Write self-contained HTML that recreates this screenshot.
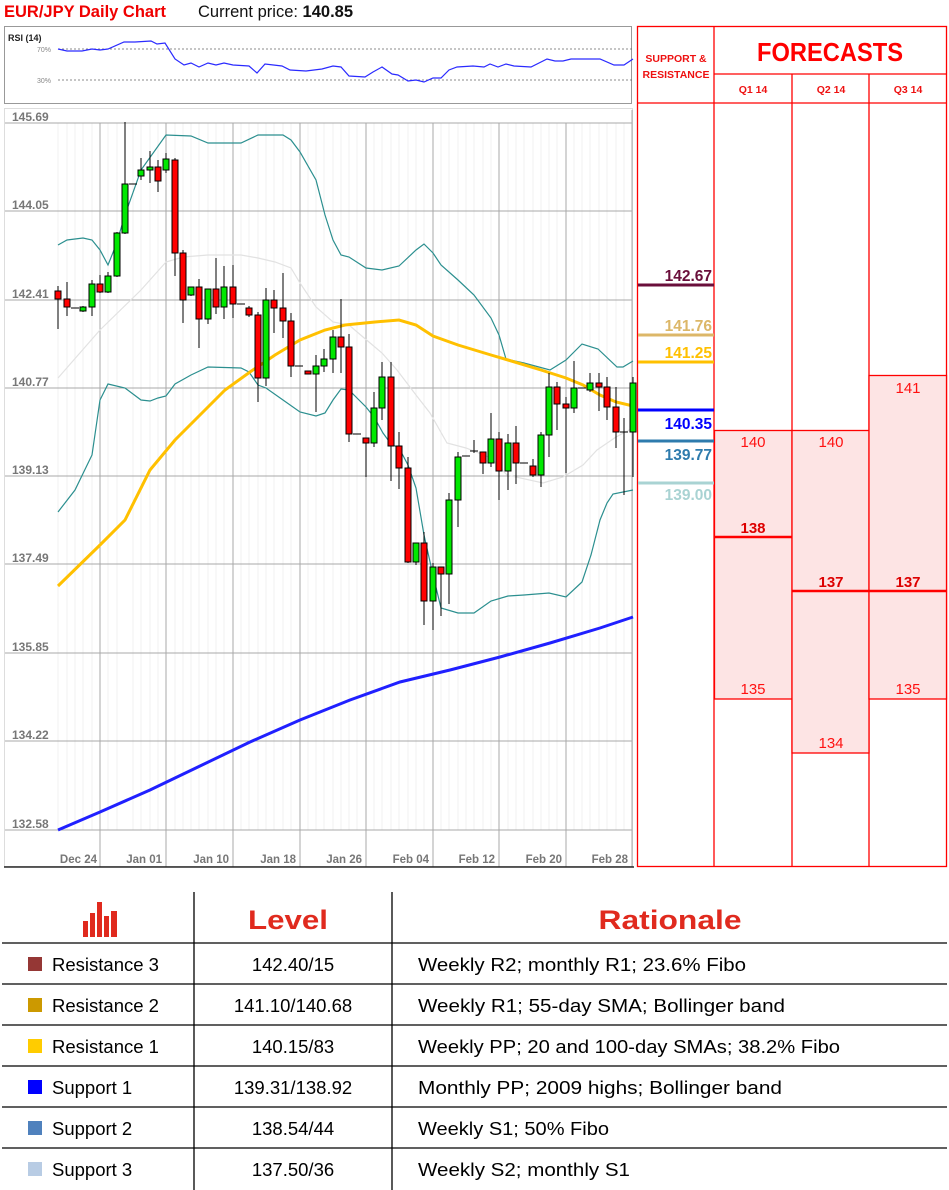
<!DOCTYPE html>
<html><head><meta charset="utf-8"><style>
html,body{margin:0;padding:0;background:#fff;}
svg{display:block;font-family:"Liberation Sans",sans-serif;}
</style></head><body>
<svg width="949" height="1190" viewBox="0 0 949 1190" xmlns="http://www.w3.org/2000/svg">
<!-- title -->
<text x="4" y="17" font-size="16.5" font-weight="bold" fill="#f00000">EUR/JPY Daily Chart</text>
<text x="198" y="17" font-size="16.5" fill="#111">Current price: <tspan font-weight="bold">140.85</tspan></text>

<!-- RSI panel -->
<rect x="4.5" y="26.5" width="627" height="77" fill="#fff" stroke="#999"/>
<text x="8" y="41" font-size="9" font-weight="bold" fill="#222">RSI (14)</text>
<line x1="58" y1="49" x2="632" y2="49" stroke="#666" stroke-dasharray="2,2" stroke-width="0.8"/>
<line x1="58" y1="80" x2="632" y2="80" stroke="#666" stroke-dasharray="2,2" stroke-width="0.8"/>
<text x="37" y="52" font-size="7" fill="#888">70%</text>
<text x="37" y="83" font-size="7" fill="#888">30%</text>
<polyline fill="none" stroke="#2a2aff" stroke-width="1.2" points="58,49 67,51 82,51 92,49 100,50 108,49 124,42 135,42 151,41 157,44 165,43 175,59 184,65 191,63 199,67 208,63 216,65 224,63 233,65 249,66 257,73 265,64 282,66 290,70 306,71 322,69 333,66 341,67 349,76 365,77 373,72 382,67 392,74 398,75 408,81 416,80 424,82 433,78 441,78 449,70 457,67 473,66 484,67 490,64 498,67 506,64 514,66 531,67 547,59 555,61 563,61 571,59 600,59 614,65 624,65 633,59"/>

<!-- chart frame -->
<rect x="4.5" y="108.5" width="628" height="758" fill="#fff" stroke="#ddd"/>
<!-- faint day lines -->
<g stroke="#f1f1f1" stroke-width="1">
<line x1="58" y1="123" x2="58" y2="830"/><line x1="67" y1="123" x2="67" y2="830"/><line x1="75" y1="123" x2="75" y2="830"/><line x1="83" y1="123" x2="83" y2="830"/><line x1="92" y1="123" x2="92" y2="830"/><line x1="108" y1="123" x2="108" y2="830"/><line x1="117" y1="123" x2="117" y2="830"/><line x1="133" y1="123" x2="133" y2="830"/><line x1="141" y1="123" x2="141" y2="830"/><line x1="150" y1="123" x2="150" y2="830"/><line x1="158" y1="123" x2="158" y2="830"/><line x1="175" y1="123" x2="175" y2="830"/><line x1="183" y1="123" x2="183" y2="830"/><line x1="191" y1="123" x2="191" y2="830"/><line x1="199" y1="123" x2="199" y2="830"/><line x1="208" y1="123" x2="208" y2="830"/><line x1="216" y1="123" x2="216" y2="830"/><line x1="224" y1="123" x2="224" y2="830"/><line x1="241" y1="123" x2="241" y2="830"/><line x1="249" y1="123" x2="249" y2="830"/><line x1="258" y1="123" x2="258" y2="830"/><line x1="266" y1="123" x2="266" y2="830"/><line x1="274" y1="123" x2="274" y2="830"/><line x1="283" y1="123" x2="283" y2="830"/><line x1="291" y1="123" x2="291" y2="830"/><line x1="308" y1="123" x2="308" y2="830"/><line x1="316" y1="123" x2="316" y2="830"/><line x1="324" y1="123" x2="324" y2="830"/><line x1="333" y1="123" x2="333" y2="830"/><line x1="341" y1="123" x2="341" y2="830"/><line x1="349" y1="123" x2="349" y2="830"/><line x1="357" y1="123" x2="357" y2="830"/><line x1="374" y1="123" x2="374" y2="830"/><line x1="382" y1="123" x2="382" y2="830"/><line x1="391" y1="123" x2="391" y2="830"/><line x1="399" y1="123" x2="399" y2="830"/><line x1="408" y1="123" x2="408" y2="830"/><line x1="416" y1="123" x2="416" y2="830"/><line x1="424" y1="123" x2="424" y2="830"/><line x1="441" y1="123" x2="441" y2="830"/><line x1="449" y1="123" x2="449" y2="830"/><line x1="458" y1="123" x2="458" y2="830"/><line x1="466" y1="123" x2="466" y2="830"/><line x1="474" y1="123" x2="474" y2="830"/><line x1="483" y1="123" x2="483" y2="830"/><line x1="491" y1="123" x2="491" y2="830"/><line x1="508" y1="123" x2="508" y2="830"/><line x1="516" y1="123" x2="516" y2="830"/><line x1="524" y1="123" x2="524" y2="830"/><line x1="533" y1="123" x2="533" y2="830"/><line x1="541" y1="123" x2="541" y2="830"/><line x1="549" y1="123" x2="549" y2="830"/><line x1="557" y1="123" x2="557" y2="830"/><line x1="574" y1="123" x2="574" y2="830"/><line x1="582" y1="123" x2="582" y2="830"/><line x1="590" y1="123" x2="590" y2="830"/><line x1="599" y1="123" x2="599" y2="830"/><line x1="607" y1="123" x2="607" y2="830"/><line x1="616" y1="123" x2="616" y2="830"/><line x1="624" y1="123" x2="624" y2="830"/>
</g>
<!-- grid -->
<g stroke="#a8a8a8" stroke-width="1">
<line x1="5" y1="123" x2="632" y2="123"/><line x1="5" y1="211" x2="632" y2="211"/><line x1="5" y1="300" x2="632" y2="300"/><line x1="5" y1="388" x2="632" y2="388"/><line x1="5" y1="476" x2="632" y2="476"/><line x1="5" y1="564" x2="632" y2="564"/><line x1="5" y1="653" x2="632" y2="653"/><line x1="5" y1="741" x2="632" y2="741"/><line x1="5" y1="830" x2="632" y2="830"/>
<line x1="100" y1="123" x2="100" y2="867"/><line x1="166" y1="123" x2="166" y2="867"/><line x1="233" y1="123" x2="233" y2="867"/><line x1="300" y1="123" x2="300" y2="867"/><line x1="366" y1="123" x2="366" y2="867"/><line x1="433" y1="123" x2="433" y2="867"/><line x1="499" y1="123" x2="499" y2="867"/><line x1="566" y1="123" x2="566" y2="867"/><line x1="632" y1="110" x2="632" y2="867"/>
</g>
<line x1="4" y1="867" x2="634" y2="867" stroke="#000" stroke-width="1.2"/>
<g font-size="12" font-weight="bold" fill="#777">
<text x="12" y="121">145.69</text><text x="12" y="209">144.05</text><text x="12" y="298">142.41</text><text x="12" y="386">140.77</text><text x="12" y="474">139.13</text><text x="12" y="562">137.49</text><text x="12" y="651">135.85</text><text x="12" y="739">134.22</text><text x="12" y="828">132.58</text>
</g>
<g font-size="11.5" font-weight="bold" fill="#777" text-anchor="end">
<text x="97" y="863">Dec 24</text><text x="162" y="863">Jan 01</text><text x="229" y="863">Jan 10</text><text x="296" y="863">Jan 18</text><text x="362" y="863">Jan 26</text><text x="429" y="863">Feb 04</text><text x="495" y="863">Feb 12</text><text x="562" y="863">Feb 20</text><text x="628" y="863">Feb 28</text>
</g>

<!-- bands & MAs -->
<polyline fill="none" stroke="#e2e2e2" stroke-width="1.2" points="58,378 100,330 141,290 166,262 183,257 208,255 241,255 258,258 275,262 291,268 300,283 316,307 333,322 349,325 363,337 382,353 397,370 416,395 430,413 447,443 466,448 491,458 507,475 543,483 563,477 583,465 597,450 616,437 633,428"/>
<polyline fill="none" stroke="#2b8f8f" stroke-width="1.2" points="58,245 67,240 83,238 92,240 100,250 108,265 116,245 125,215 141,170 166,135 191,136 208,143 241,143 258,135 283,135 291,140 300,152 316,180 325,215 333,240 341,255 349,257 366,268 382,270 399,266 416,250 424,244 433,253 441,265 458,280 474,295 491,318 499,335 506,359 524,363 550,370 566,360 582,344 598,349 617,367 623,367 633,361"/>
<polyline fill="none" stroke="#2b8f8f" stroke-width="1.2" points="58,512 75,490 92,455 100,400 108,384 125,388 141,400 150,401 158,398 166,396 175,384 191,375 208,367 241,368 249,372 258,385 266,388 283,400 300,412 316,416 325,413 333,400 341,389 349,390 358,399 366,407 374,417 383,433 391,444 399,448 408,465 416,488 424,535 433,575 441,608 458,613 474,613 491,601 508,596 524,595 549,593 566,597 582,582 591,555 600,520 607,503 613,494 633,490"/>
<polyline fill="none" stroke="#ffc000" stroke-width="3" points="58,586 100,545 125,520 150,470 175,440 200,415 225,390 250,372 275,355 300,340 325,330 345,325 375,322 399,320 416,325 433,336 458,345 491,355 508,360 541,370 566,378 583,385 600,395 616,402 633,406"/>
<polyline fill="none" stroke="#2020ff" stroke-width="3" points="58,830 100,812 150,790 200,766 250,742 300,720 350,700 400,682 450,670 500,657 550,643 600,628 633,617"/>

<!-- candles -->
<g stroke="#000" stroke-width="1">
<line x1="58" y1="286" x2="58" y2="329"/><rect x="55" y="291" width="6" height="8" fill="#ff0000"/>
<line x1="67" y1="282" x2="67" y2="316"/><rect x="64" y="299" width="6" height="8" fill="#ff0000"/>
<line x1="71" y1="308" x2="79" y2="308"/>
<line x1="83" y1="306" x2="83" y2="312"/><rect x="80" y="307" width="6" height="4" fill="#00e800"/>
<line x1="92" y1="280" x2="92" y2="316"/><rect x="89" y="284" width="6" height="23" fill="#00e800"/>
<line x1="100" y1="275" x2="100" y2="293"/><rect x="97" y="284" width="6" height="8" fill="#ff0000"/>
<line x1="108" y1="272" x2="108" y2="293"/><rect x="105" y="276" width="6" height="16" fill="#00e800"/>
<line x1="117" y1="232" x2="117" y2="277"/><rect x="114" y="233" width="6" height="43" fill="#00e800"/>
<line x1="125" y1="122" x2="125" y2="234"/><rect x="122" y="184" width="6" height="49" fill="#00e800"/>
<line x1="129" y1="184" x2="137" y2="184"/>
<line x1="141" y1="158" x2="141" y2="180"/><rect x="138" y="170" width="6" height="6" fill="#00e800"/>
<line x1="150" y1="151" x2="150" y2="183"/><rect x="147" y="167" width="6" height="3" fill="#00e800"/>
<line x1="158" y1="160" x2="158" y2="192"/><rect x="155" y="167" width="6" height="14" fill="#ff0000"/>
<line x1="166" y1="153" x2="166" y2="173"/><rect x="163" y="159" width="6" height="11" fill="#00e800"/>
<line x1="175" y1="158" x2="175" y2="276"/><rect x="172" y="160" width="6" height="93" fill="#ff0000"/>
<line x1="183" y1="250" x2="183" y2="323"/><rect x="180" y="253" width="6" height="47" fill="#ff0000"/>
<line x1="191" y1="287" x2="191" y2="296"/><rect x="188" y="287" width="6" height="8" fill="#00e800"/>
<line x1="199" y1="279" x2="199" y2="348"/><rect x="196" y="287" width="6" height="32" fill="#ff0000"/>
<line x1="208" y1="289" x2="208" y2="324"/><rect x="205" y="289" width="6" height="30" fill="#00e800"/>
<line x1="216" y1="258" x2="216" y2="314"/><rect x="213" y="289" width="6" height="18" fill="#ff0000"/>
<line x1="224" y1="266" x2="224" y2="319"/><rect x="221" y="287" width="6" height="20" fill="#00e800"/>
<line x1="233" y1="265" x2="233" y2="318"/><rect x="230" y="287" width="6" height="17" fill="#ff0000"/>
<line x1="237" y1="304" x2="245" y2="304"/>
<line x1="249" y1="306" x2="249" y2="317"/><rect x="246" y="308" width="6" height="7" fill="#ff0000"/>
<line x1="258" y1="312" x2="258" y2="402"/><rect x="255" y="315" width="6" height="63" fill="#ff0000"/>
<line x1="266" y1="288" x2="266" y2="386"/><rect x="263" y="300" width="6" height="78" fill="#00e800"/>
<line x1="274" y1="290" x2="274" y2="333"/><rect x="271" y="300" width="6" height="8" fill="#ff0000"/>
<line x1="283" y1="273" x2="283" y2="338"/><rect x="280" y="308" width="6" height="13" fill="#ff0000"/>
<line x1="291" y1="313" x2="291" y2="377"/><rect x="288" y="321" width="6" height="45" fill="#ff0000"/>
<line x1="295" y1="366" x2="303" y2="366"/>
<rect x="305" y="371" width="6" height="3" fill="#ff0000"/>
<line x1="316" y1="355" x2="316" y2="412"/><rect x="313" y="366" width="6" height="8" fill="#00e800"/>
<line x1="324" y1="349" x2="324" y2="372"/><rect x="321" y="359" width="6" height="7" fill="#00e800"/>
<line x1="333" y1="330" x2="333" y2="373"/><rect x="330" y="337" width="6" height="22" fill="#00e800"/>
<line x1="341" y1="299" x2="341" y2="373"/><rect x="338" y="337" width="6" height="10" fill="#ff0000"/>
<line x1="349" y1="334" x2="349" y2="442"/><rect x="346" y="347" width="6" height="87" fill="#ff0000"/>
<line x1="353" y1="434" x2="361" y2="434"/>
<line x1="366" y1="438" x2="366" y2="477"/><rect x="363" y="438" width="6" height="5" fill="#ff0000"/>
<line x1="374" y1="392" x2="374" y2="447"/><rect x="371" y="408" width="6" height="35" fill="#00e800"/>
<line x1="382" y1="362" x2="382" y2="420"/><rect x="379" y="377" width="6" height="31" fill="#00e800"/>
<line x1="391" y1="362" x2="391" y2="481"/><rect x="388" y="377" width="6" height="69" fill="#ff0000"/>
<line x1="399" y1="432" x2="399" y2="489"/><rect x="396" y="446" width="6" height="22" fill="#ff0000"/>
<line x1="408" y1="457" x2="408" y2="563"/><rect x="405" y="468" width="6" height="94" fill="#ff0000"/>
<line x1="416" y1="543" x2="416" y2="565"/><rect x="413" y="543" width="6" height="19" fill="#00e800"/>
<line x1="424" y1="532" x2="424" y2="625"/><rect x="421" y="543" width="6" height="58" fill="#ff0000"/>
<line x1="433" y1="563" x2="433" y2="630"/><rect x="430" y="567" width="6" height="34" fill="#00e800"/>
<line x1="441" y1="567" x2="441" y2="616"/><rect x="438" y="567" width="6" height="7" fill="#ff0000"/>
<line x1="449" y1="493" x2="449" y2="604"/><rect x="446" y="500" width="6" height="74" fill="#00e800"/>
<line x1="458" y1="452" x2="458" y2="527"/><rect x="455" y="457" width="6" height="43" fill="#00e800"/>
<line x1="462" y1="456" x2="470" y2="456"/>
<line x1="474" y1="440" x2="474" y2="453"/><line x1="470" y1="451" x2="478" y2="451"/>
<line x1="483" y1="452" x2="483" y2="474"/><rect x="480" y="452" width="6" height="11" fill="#ff0000"/>
<line x1="491" y1="413" x2="491" y2="467"/><rect x="488" y="439" width="6" height="24" fill="#00e800"/>
<line x1="499" y1="432" x2="499" y2="500"/><rect x="496" y="439" width="6" height="32" fill="#ff0000"/>
<line x1="508" y1="434" x2="508" y2="490"/><rect x="505" y="443" width="6" height="28" fill="#00e800"/>
<line x1="516" y1="426" x2="516" y2="484"/><rect x="513" y="443" width="6" height="20" fill="#ff0000"/>
<line x1="520" y1="463" x2="528" y2="463"/>
<line x1="533" y1="459" x2="533" y2="477"/><rect x="530" y="466" width="6" height="9" fill="#ff0000"/>
<line x1="541" y1="432" x2="541" y2="487"/><rect x="538" y="435" width="6" height="40" fill="#00e800"/>
<line x1="549" y1="373" x2="549" y2="457"/><rect x="546" y="387" width="6" height="48" fill="#00e800"/>
<line x1="557" y1="382" x2="557" y2="430"/><rect x="554" y="387" width="6" height="17" fill="#ff0000"/>
<line x1="566" y1="397" x2="566" y2="473"/><rect x="563" y="404" width="6" height="4" fill="#ff0000"/>
<line x1="574" y1="361" x2="574" y2="413"/><rect x="571" y="388" width="6" height="20" fill="#00e800"/>
<line x1="578" y1="388" x2="586" y2="388"/>
<line x1="590" y1="373" x2="590" y2="392"/><rect x="587" y="383" width="6" height="7" fill="#00e800"/>
<line x1="599" y1="373" x2="599" y2="411"/><rect x="596" y="383" width="6" height="4" fill="#ff0000"/>
<line x1="607" y1="377" x2="607" y2="420"/><rect x="604" y="387" width="6" height="20" fill="#ff0000"/>
<line x1="616" y1="387" x2="616" y2="448"/><rect x="613" y="407" width="6" height="25" fill="#ff0000"/>
<line x1="624" y1="418" x2="624" y2="495"/><line x1="620" y1="432" x2="628" y2="432"/>
<line x1="633" y1="377" x2="633" y2="477"/><rect x="630" y="383" width="6" height="49" fill="#00e800"/>
</g>

<!-- right panel -->
<g stroke="#ff0000" stroke-width="1.3" fill="none">
<rect x="637.5" y="26.5" width="309" height="840"/>
<line x1="714" y1="26" x2="714" y2="867"/>
<line x1="714" y1="74" x2="947" y2="74"/>
<line x1="637" y1="103" x2="947" y2="103"/>
<line x1="792" y1="74" x2="792" y2="867"/>
<line x1="869" y1="74" x2="869" y2="867"/>
</g>
<text x="676" y="62" font-size="10.5" font-weight="bold" fill="#ee1111" text-anchor="middle">SUPPORT &amp;</text>
<text x="676" y="78" font-size="10.5" font-weight="bold" fill="#ee1111" text-anchor="middle">RESISTANCE</text>
<text x="830" y="61" font-size="26" font-weight="bold" fill="#ff0000" text-anchor="middle" textLength="146" lengthAdjust="spacingAndGlyphs">FORECASTS</text>
<text x="753" y="93" font-size="10.5" font-weight="bold" fill="#ee1111" text-anchor="middle">Q1 14</text>
<text x="831" y="93" font-size="10.5" font-weight="bold" fill="#ee1111" text-anchor="middle">Q2 14</text>
<text x="908" y="93" font-size="10.5" font-weight="bold" fill="#ee1111" text-anchor="middle">Q3 14</text>

<!-- forecast boxes -->
<g stroke="#ff0000" stroke-width="1.3">
<rect x="714.5" y="430.5" width="77.5" height="268.5" fill="#fde4e4"/>
<rect x="792" y="430.5" width="77" height="322.5" fill="#fde4e4"/>
<rect x="869" y="375.5" width="77.5" height="323.5" fill="#fde4e4"/>
</g>
<g stroke="#ff0000" stroke-width="2.5">
<line x1="714" y1="537" x2="792" y2="537"/>
<line x1="792" y1="591" x2="947" y2="591"/>
</g>
<g font-size="15" fill="#ff1111" text-anchor="middle">
<text x="753" y="447">140</text><text x="753" y="694">135</text>
<text x="831" y="447">140</text><text x="831" y="748">134</text>
<text x="908" y="393">141</text><text x="908" y="694">135</text>
</g>
<g font-size="15" font-weight="bold" fill="#dd0000" text-anchor="middle">
<text x="753" y="533">138</text><text x="831" y="587">137</text><text x="908" y="587">137</text>
</g>

<!-- S&R levels -->
<g stroke-width="3">
<line x1="638" y1="285" x2="714" y2="285" stroke="#6a0f3b"/>
<line x1="638" y1="335" x2="714" y2="335" stroke="#dcb768"/>
<line x1="638" y1="362" x2="714" y2="362" stroke="#ffc000"/>
<line x1="638" y1="410" x2="714" y2="410" stroke="#0000ff"/>
<line x1="638" y1="441" x2="714" y2="441" stroke="#2e7bad"/>
<line x1="638" y1="483" x2="714" y2="483" stroke="#a9d3d3"/>
</g>
<g font-size="15.5" font-weight="bold" text-anchor="end">
<text x="712" y="281" fill="#6a0f3b">142.67</text>
<text x="712" y="331" fill="#dcb768">141.76</text>
<text x="712" y="358" fill="#ffc000">141.25</text>
<text x="712" y="429" fill="#0000ff">140.35</text>
<text x="712" y="460" fill="#2e7bad">139.77</text>
<text x="712" y="500" fill="#a9d3d3">139.00</text>
</g>

<!-- table -->
<g fill="#e02a1e">
<rect x="83" y="921" width="5" height="16"/><rect x="90" y="913" width="5" height="24"/><rect x="97" y="902" width="5" height="35"/><rect x="104" y="916" width="5" height="21"/><rect x="111" y="911" width="6" height="26"/>
</g>
<g stroke="#000" stroke-width="1.3">
<line x1="194" y1="892" x2="194" y2="1190"/>
<line x1="392" y1="892" x2="392" y2="1190"/>
<line x1="2" y1="943" x2="947" y2="943"/>
<line x1="2" y1="984" x2="947" y2="984"/>
<line x1="2" y1="1025" x2="947" y2="1025"/>
<line x1="2" y1="1066" x2="947" y2="1066"/>
<line x1="2" y1="1107" x2="947" y2="1107"/>
<line x1="2" y1="1148" x2="947" y2="1148"/>
</g>
<text x="288" y="929" font-size="27" font-weight="bold" fill="#e02a1e" text-anchor="middle" textLength="80" lengthAdjust="spacingAndGlyphs">Level</text>
<text x="670" y="929" font-size="27" font-weight="bold" fill="#e02a1e" text-anchor="middle" textLength="143" lengthAdjust="spacingAndGlyphs">Rationale</text>
<rect x="28" y="957" width="14" height="14" fill="#953735"/>
<rect x="28" y="998" width="14" height="14" fill="#cc9900"/>
<rect x="28" y="1039" width="14" height="14" fill="#ffcc00"/>
<rect x="28" y="1080" width="14" height="14" fill="#0000ff"/>
<rect x="28" y="1121" width="14" height="14" fill="#4f81bd"/>
<rect x="28" y="1162" width="14" height="14" fill="#b8cce4"/>
<g font-size="18.5" fill="#000">
<text x="52" y="971">Resistance 3</text>
<text x="52" y="1012">Resistance 2</text>
<text x="52" y="1053">Resistance 1</text>
<text x="52" y="1094">Support 1</text>
<text x="52" y="1135">Support 2</text>
<text x="52" y="1176">Support 3</text>
</g>
<g font-size="18.5" fill="#000" text-anchor="middle">
<text x="293" y="971">142.40/15</text>
<text x="293" y="1012">141.10/140.68</text>
<text x="293" y="1053">140.15/83</text>
<text x="293" y="1094">139.31/138.92</text>
<text x="293" y="1135">138.54/44</text>
<text x="293" y="1176">137.50/36</text>
</g>
<g font-size="18.5" fill="#000">
<text x="418" y="971" textLength="328" lengthAdjust="spacingAndGlyphs">Weekly R2; monthly R1; 23.6% Fibo</text>
<text x="418" y="1012" textLength="367" lengthAdjust="spacingAndGlyphs">Weekly R1; 55-day SMA; Bollinger band</text>
<text x="418" y="1053" textLength="422" lengthAdjust="spacingAndGlyphs">Weekly PP; 20 and 100-day SMAs; 38.2% Fibo</text>
<text x="418" y="1094" textLength="364" lengthAdjust="spacingAndGlyphs">Monthly PP; 2009 highs; Bollinger band</text>
<text x="418" y="1135" textLength="191" lengthAdjust="spacingAndGlyphs">Weekly S1; 50% Fibo</text>
<text x="418" y="1176" textLength="212" lengthAdjust="spacingAndGlyphs">Weekly S2; monthly S1</text>
</g>
</svg>
</body></html>
